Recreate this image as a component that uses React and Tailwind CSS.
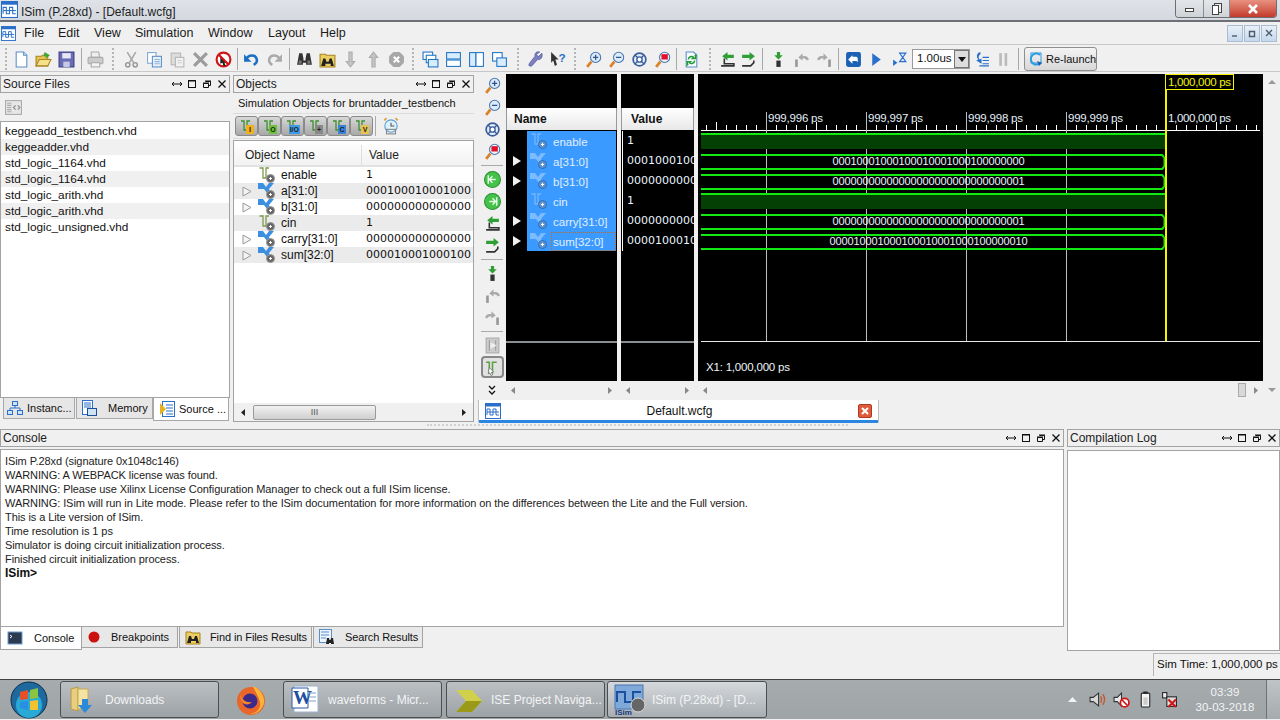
import React from "react";

const UI = "font-['Liberation_Sans',Arial,sans-serif]";

// --- little drawn icons ---
const Svg = ({ s = 17, v = 16, children, className = "" }) => (
  <svg width={s} height={s} viewBox={`0 0 ${v} ${v}`} className={`shrink-0 ${className}`}>
    {children}
  </svg>
);

const WaveLogo = ({ s = 16 }) => (
  <Svg s={s}>
    <rect x="0.5" y="0.5" width="15" height="15" fill="#fff" stroke="#2a6fc9" />
    <rect x="0.5" y="0.5" width="15" height="3" fill="#2a6fc9" />
    <path d="M2 12V6h3v6h3V6h3v6h3" fill="none" stroke="#2a6fc9" />
    <path d="M2 9h12" stroke="#2a6fc9" />
  </Svg>
);

const Doc = () => (
  <Svg>
    <path d="M3 1h7l3 3v11H3z" fill="#fff" stroke="#5b8fc7" />
    <path d="M10 1v3h3" fill="#cfe3f7" stroke="#5b8fc7" />
  </Svg>
);
const OpenFolder = () => (
  <Svg>
    <path d="M1 5h5l1-1h5v10H1z" fill="#e8c34f" stroke="#a78420" />
    <path d="M1 14l3-6h11l-3 6z" fill="#f6e08a" stroke="#a78420" />
    <path d="M9 1l5 3-4 3V5H8z" fill="#3fa535" />
  </Svg>
);
const Floppy = () => (
  <Svg>
    <rect x="1" y="1" width="14" height="14" fill="#6a6db5" stroke="#3b3d80" />
    <rect x="4" y="2" width="8" height="5" fill="#e6e8f5" />
    <rect x="5" y="10" width="6" height="5" fill="#c8cae5" />
  </Svg>
);
const Printer = () => (
  <Svg>
    <path d="M4 1h7l1 5H4z" fill="#eee" stroke="#aaa" />
    <rect x="1" y="6" width="14" height="6" rx="1" fill="#ccc" stroke="#aaa" />
    <rect x="4" y="11" width="8" height="4" fill="#f4f4f4" stroke="#aaa" />
  </Svg>
);
const Scissors = () => (
  <Svg>
    <path d="M4 1l6 10M12 1L6 11" stroke="#aaa" strokeWidth="1.6" />
    <circle cx="4.5" cy="13" r="2" fill="none" stroke="#999" strokeWidth="1.4" />
    <circle cx="11.5" cy="13" r="2" fill="none" stroke="#999" strokeWidth="1.4" />
  </Svg>
);
const Copy = () => (
  <Svg>
    <rect x="1.5" y="1.5" width="8" height="10" fill="#fff" stroke="#7fa7d4" />
    <rect x="6" y="5" width="8.5" height="10" fill="#e8f1fb" stroke="#5b8fc7" />
    <path d="M8 8h5M8 10h5M8 12h5" stroke="#8fb3dc" />
  </Svg>
);
const Paste = () => (
  <Svg>
    <rect x="2" y="2" width="9" height="11" fill="#ddd" stroke="#b5b5b5" />
    <rect x="6" y="6" width="8" height="9" fill="#f2f2f2" stroke="#b5b5b5" />
    <path d="M8 9h4M8 11h4" stroke="#ccc" />
  </Svg>
);
const Cross = () => (
  <Svg>
    <path d="M2 2l12 12M14 2L2 14" stroke="#9c9c9c" strokeWidth="3" />
  </Svg>
);
const NoSign = () => (
  <Svg>
    <circle cx="8" cy="8" r="6.5" fill="#fff" stroke="#d01515" strokeWidth="2" />
    <path d="M5 4l6 7-2 0 1 3-2 0-1-3-2 1z" fill="#222" />
    <path d="M3.5 3.5l9 9" stroke="#d01515" strokeWidth="2" />
  </Svg>
);
const Undo = ({ c = "#1a6fc4" }) => (
  <Svg>
    <path d="M3 8c2-5 9-5 10 0 .4 2-1 4-3 5" fill="none" stroke={c} strokeWidth="2.4" />
    <path d="M1 3v7h7z" fill={c} />
  </Svg>
);
const Redo = () => (
  <Svg>
    <path d="M13 8C11 3 4 3 3 8c-.4 2 1 4 3 5" fill="none" stroke="#aaa" strokeWidth="2.4" />
    <path d="M15 3v7H8z" fill="#aaa" />
  </Svg>
);
const Binoc = ({ s = 17 }) => (
  <Svg s={s}>
    <path d="M3 2h3l1 5v2h2V7l1-5h3l2 11H9.500v-2h-3v2H1z" fill="#333" />
    <path d="M3 9l-.8 3h3V9zM13 9l.8 3h-3V9z" fill="#777" />
  </Svg>
);
const FolderBin = ({ s = 17 }) => (
  <Svg s={s}>
    <path d="M1 3h5l1 1h8v11H1z" fill="#eccd60" stroke="#a78420" />
    <path d="M4 7h2l1 3h2l1-3h2l2 7h-3v-2H6v2H2z" fill="#222" />
  </Svg>
);
const Arrow = ({ up }) => (
  <Svg className={up ? "" : "rotate-180"}>
    <path d="M8 1l4 5H9.500v9h-3V6H4z" fill="#c4c4c4" stroke="#adadad" />
  </Svg>
);
const StopGrey = () => (
  <Svg>
    <path d="M5 1h6l4 4v6l-4 4H5l-4-4V5z" fill="#a8a8a8" />
    <path d="M5.500 5.500l5 5M10.500 5.500l-5 5" stroke="#fff" strokeWidth="2" />
  </Svg>
);
const Tile = ({ kind }) => (
  <Svg>
    {kind === "casc" && (
      <>
        <rect x="1" y="1" width="9" height="7" fill="#fff" stroke="#1f74c4" />
        <rect x="4" y="4" width="9" height="7" fill="#fff" stroke="#1f74c4" />
        <rect x="6" y="8" width="9" height="7" fill="#d8ecff" stroke="#1f74c4" />
      </>
    )}
    {kind === "h" && (
      <>
        <rect x="1.500" y="1.500" width="13" height="6" fill="#d8ecff" stroke="#1f74c4" />
        <rect x="1.500" y="8.500" width="13" height="6" fill="#fff" stroke="#1f74c4" />
      </>
    )}
    {kind === "v" && (
      <>
        <rect x="1.500" y="1.500" width="6" height="13" fill="#d8ecff" stroke="#1f74c4" />
        <rect x="7.500" y="1.500" width="7" height="13" fill="#fff" stroke="#1f74c4" />
      </>
    )}
    {kind === "two" && (
      <>
        <rect x="1.500" y="1.500" width="9" height="8" fill="#fff" stroke="#1f74c4" />
        <rect x="5.500" y="6.500" width="9" height="8" fill="#d8ecff" stroke="#1f74c4" />
      </>
    )}
  </Svg>
);
const Wrench = () => (
  <Svg>
    <path d="M14 2l-3 3-1.500-.5L9 3l3-2C9 0 7 2 7.500 5L2 12c-1 2 1 3 2.500 2L10 8c3 .5 5-2 4-6z" fill="#7c7fc0" stroke="#4e5196" strokeWidth=".6" />
  </Svg>
);
const HelpArrow = () => (
  <Svg>
    <path d="M2 1l7 7H6l1.500 5-2 1L4 9l-2 2z" fill="#333" />
    <text x="9" y="10" fontSize="11" fontWeight="700" fill="#2a6fc9" fontFamily="Liberation Sans">?</text>
  </Svg>
);
const Mag = ({ kind = "in" }) => (
  <Svg>
    <path d="M6 10l-4 5" stroke="#d9822b" strokeWidth="2.6" />
    <circle cx="10" cy="6" r="4.800" fill={kind === "mark" ? "#f4f4f4" : "#dcebfa"} stroke="#4a77b0" />
    {kind === "in" && <path d="M7.500 6h5M10 3.500v5" stroke="#33568a" strokeWidth="1.200" />}
    {kind === "out" && <path d="M7.500 6h5" stroke="#33568a" strokeWidth="1.200" />}
    {kind === "mark" && <rect x="7" y="3" width="6" height="5" fill="#e0102a" />}
  </Svg>
);
const Fit = () => (
  <Svg>
    <circle cx="8" cy="8" r="6" fill="#e4effa" stroke="#3c5f9c" strokeWidth="1.600" />
    <circle cx="8" cy="8" r="2.500" fill="#fff" stroke="#3c5f9c" strokeWidth="1.300" />
    <path d="M3.500 3.500l3 3M12.500 3.500l-3 3M3.500 12.500l3-3M12.500 12.500l-3-3" stroke="#3c5f9c" strokeWidth="1.300" />
  </Svg>
);
const Refresh = () => (
  <Svg>
    <path d="M3 1h7l3 3v11H3z" fill="#f5fbff" stroke="#5b8fc7" />
    <path d="M5 8a3 3 0 0 1 5-2l-1 1h3V4l-1 1M11 9a3 3 0 0 1-5 2l1-1H4v3l1-1" fill="none" stroke="#239a35" strokeWidth="1.400" />
  </Svg>
);
const StepBack = () => (
  <Svg>
    <path d="M2 14h12v-2H5V7" fill="none" stroke="#333" strokeWidth="1.500" />
    <path d="M3 5l5-4v2.500h6v3H8V9z" fill="#2f9e35" />
  </Svg>
);
const StepFwd = () => (
  <Svg>
    <path d="M2 14h8l3-3V9" fill="none" stroke="#333" strokeWidth="1.500" />
    <path d="M14 5L9 1v2.500H2v3h7V9z" fill="#2f9e35" />
  </Svg>
);
const StepInto = () => (
  <Svg>
    <rect x="6" y="9" width="4" height="6" fill="#333" />
    <path d="M8 8l4-4H9.500V1h-3v3H4z" fill="#2f9e35" />
  </Svg>
);
const StepOver = ({ flip }) => (
  <Svg className={flip ? "-scale-x-100" : ""}>
    <rect x="2" y="8" width="2.500" height="7" fill="#999" />
    <path d="M5 8c1-3 3-4 6-3v-3l4 4-4 3V7c-2-.5-3 .5-4 2z" fill="#aaa" transform="matrix(-1 0 0 1 20 0)" />
  </Svg>
);
const BackBlue = () => (
  <Svg>
    <rect x="1" y="1" width="14" height="14" rx="2" fill="#1b62b5" />
    <path d="M7 4L3 8l4 4V9.500h3c1 0 2 .5 2 1.500V7c0-1-1-1.500-2-1.500H7z" fill="#fff" />
  </Svg>
);
const PlayBlue = () => (
  <Svg>
    <path d="M4 2l8 6-8 6z" fill="#2a6fc9" />
  </Svg>
);
const Hourglass = () => (
  <Svg>
    <path d="M2 8l4 3-4 3z" fill="#2a6fc9" />
    <path d="M8 2h6l-3 4 3 4H8l3-4z" fill="#d8ecff" stroke="#2a6fc9" />
  </Svg>
);
const Relaunch = () => (
  <Svg s={16}>
    <path d="M12 4a5.500 5.500 0 1 0 1 7" fill="none" stroke="#2e9be0" strokeWidth="2" />
    <rect x="3" y="2" width="10" height="10" fill="none" stroke="#2e9be0" />
    <path d="M9 10l5 2-3 3z" fill="#1b62b5" />
  </Svg>
);
const RunAll = () => (
  <Svg>
    <path d="M7 1C3 2 3 6 5 8l-2 1 5 3V7L6 8C5 6 5 4 7 3z" fill="#2a6fc9" />
    <path d="M9 6h6M9 9h6M9 12h6M6 14h9" stroke="#2a6fc9" />
  </Svg>
);
const Pause = () => (
  <Svg>
    <rect x="4" y="2" width="2.500" height="12" fill="#bbb" />
    <rect x="9" y="2" width="2.500" height="12" fill="#bbb" />
  </Svg>
);

const LogicSig = ({ light }) => (
  <Svg s={18} v={18}>
    <path d="M1.500 2H5v10h3V2h3" fill="none" stroke={light ? "#74b6ff" : "#7c9c4e"} strokeWidth="1.300" />
    <circle cx="12.500" cy="12.500" r="4" fill={light ? "#5f94d0" : "#666"} stroke={light ? "#2d6cb8" : "#999"} />
    <path d="M11 12.500h3M12.500 11v3" stroke="#fff" />
  </Svg>
);
const BusSig = ({ light }) => (
  <Svg s={18} v={18}>
    <path d="M0 1h5l3 4 3-4h5L11 7l1 3-3 1-3-4H0z" fill={light ? "#7dbbff" : "#3d8fe0"} />
    <circle cx="12.500" cy="12.500" r="4" fill={light ? "#5f94d0" : "#666"} stroke={light ? "#2d6cb8" : "#999"} />
    <path d="M11 12.500h3M12.500 11v3" stroke="#fff" />
  </Svg>
);

const DockCtrls = () => (
  <div className="flex items-center gap-[3px] text-[#111]">
    <Svg s={12} v={12}><path d="M1 6h10M3 4L1 6l2 2M9 4l2 2-2 2" fill="none" stroke="#111" /></Svg>
    <Svg s={12} v={12}><rect x="2.500" y="2.500" width="7" height="7" fill="none" stroke="#111" /><path d="M2 3h8" stroke="#111" /></Svg>
    <Svg s={12} v={12}><path d="M4.500 3.500h5v4h-2M2.500 5.500h5v4h-5z" fill="none" stroke="#111" /><path d="M4 3h6M2 5h6" stroke="#111" /></Svg>
    <Svg s={12} v={12}><path d="M2.500 2.500l7 7M9.500 2.500l-7 7" stroke="#111" strokeWidth="1.300" /></Svg>
  </div>
);

const PanelHead = ({ title }) => (
  <div className="h-[18px] flex items-center justify-between border border-[#a3a3a3] pl-[2px] pr-[1px] bg-[#f0f0f0] text-[12px] text-[#222]">
    <span className="whitespace-nowrap">{title}</span>
    <DockCtrls />
  </div>
);

const Grip = ({ w }) => (
  <div className={`${w} h-[22px] flex justify-center shrink-0`}>
    <div className="h-full border-l-2 border-dotted border-[#b5b5b5]" />
  </div>
);
const Sep = ({ w }) => (
  <div className={`${w} h-[22px] flex justify-center shrink-0`}>
    <div className="w-px h-full bg-[#a8a8a8]" />
  </div>
);
const Tb = ({ children, w = "w-[23px]" }) => <div className={`${w} h-[22px] flex items-center justify-center shrink-0`}>{children}</div>;

const Toolbar = () => (
  <div className="h-[28px] border-y border-[#c8c8c8] flex items-center pl-[1px] pt-[2px] bg-[#f0f0f0]">
    <Grip w="w-[9px]" />
    <Tb w="w-[22.500px]"><Doc /></Tb><Tb w="w-[22.500px]"><OpenFolder /></Tb><Tb w="w-[22.500px]"><Floppy /></Tb>
    <Sep w="w-[7px]" />
    <Tb w="w-[22.500px]"><Printer /></Tb>
    <Grip w="w-[12.500px]" />
    <Tb><Scissors /></Tb><Tb><Copy /></Tb><Tb><Paste /></Tb><Tb><Cross /></Tb><Tb><NoSign /></Tb>
    <Sep w="w-[5px]" />
    <Tb><Undo /></Tb><Tb><Redo /></Tb>
    <Sep w="w-[7px]" />
    <Tb><Binoc /></Tb><Tb><FolderBin /></Tb><Tb><Arrow /></Tb><Tb><Arrow up /></Tb><Tb><StopGrey /></Tb>
    <Grip w="w-[11px]" />
    <Tb><Tile kind="casc" /></Tb><Tb><Tile kind="h" /></Tb><Tb><Tile kind="v" /></Tb><Tb><Tile kind="two" /></Tb>
    <Grip w="w-[14px]" />
    <Tb w="w-[22px]"><Wrench /></Tb><Tb w="w-[22px]"><HelpArrow /></Tb>
    <Grip w="w-[13px]" />
    <Tb><Mag /></Tb><Tb><Mag kind="out" /></Tb><Tb><Fit /></Tb><Tb><Mag kind="mark" /></Tb>
    <Sep w="w-[6px]" />
    <Tb><Refresh /></Tb>
    <Grip w="w-[14.500px]" />
    <Tb w="w-[21px]"><StepBack /></Tb><Tb w="w-[21px]"><StepFwd /></Tb>
    <Sep w="w-[7.500px]" />
    <Tb><StepInto /></Tb><Tb><StepOver /></Tb><Tb><StepOver flip /></Tb>
    <Sep w="w-[6px]" />
    <Tb><BackBlue /></Tb><Tb><PlayBlue /></Tb><Tb><Hourglass /></Tb>
    <div className="w-[58px] h-[20px] ml-[1.500px] border border-[#9a9a9a] bg-white flex items-center justify-between pl-[4px] text-[11.500px] text-[#111] shrink-0">
      1.00us
      <div className="w-[15px] h-[18px] border border-[#777] bg-[#ddd] flex items-center justify-center">
        <Svg s={8} v={8}><path d="M0 2h8L4 7z" fill="#111" /></Svg>
      </div>
    </div>
    <Tb><RunAll /></Tb><Tb w="w-[20px]"><Pause /></Tb>
    <Sep w="w-[11px]" />
    <div className="w-[73px] h-[24px] rounded-[3px] border border-[#8f8f8f] bg-gradient-to-b from-[#f4f4f4] to-[#d8d8d8] flex items-center gap-[2px] pl-[3px] text-[11px] text-[#111] shrink-0 whitespace-nowrap">
      <Relaunch />
      Re-launch
    </div>
  </div>
);

const files = ["keggeadd_testbench.vhd", "keggeadder.vhd", "std_logic_1164.vhd", "std_logic_1164.vhd", "std_logic_arith.vhd", "std_logic_arith.vhd", "std_logic_unsigned.vhd"];

const SourcePanel = () => (
  <div className="w-[230px] pt-[3px] flex flex-col shrink-0">
    <PanelHead title="Source Files" />
    <div className="h-[28px] flex items-center pl-[5px]">
      <Svg>
        <rect x="0.500" y="1.500" width="15" height="13" fill="#e6e6e6" stroke="#aaa" />
        <path d="M2 4h4M2 6h4M2 8h4M2 10h4M2 12h4" stroke="#aaa" />
        <path d="M10 6L8 8l2 2M12 6l2 2-2 2" fill="none" stroke="#888" />
      </Svg>
    </div>
    <div className="h-[277px] bg-white border border-[#a3a3a3] pt-[1px] text-[11.800px] text-[#111]">
      {files.map((f, i) => (
        <div key={i} className={`h-[16px] pl-[4px] leading-[16px] ${i % 2 ? "bg-[#f0f0f0]" : ""}`}>{f}</div>
      ))}
    </div>
    <div className="flex h-[23px] text-[11px] text-[#111]">
      <div className="ml-[3px] w-[72px] h-[21px] border-x border-b border-[#a8a8a8] bg-[#e6e6e6] flex items-center gap-[4px] pl-[3px]">
        <Svg s={16}><rect x="5.500" y="1.500" width="5" height="4" fill="#cfe3f7" stroke="#2a6fc9" /><rect x="0.500" y="10.500" width="5" height="4" fill="#cfe3f7" stroke="#2a6fc9" /><rect x="10.500" y="10.500" width="5" height="4" fill="#cfe3f7" stroke="#2a6fc9" /><path d="M8 5v3M3 10V8h10v2" fill="none" stroke="#2a6fc9" /></Svg>
        <span className="whitespace-nowrap">Instanc...</span>
      </div>
      <div className="ml-[1px] w-[77px] h-[21px] border-x border-b border-[#a8a8a8] bg-[#e6e6e6] flex items-center gap-[11px] pl-[4px]">
        <Svg s={16}><rect x="1.500" y="0.500" width="10" height="14" fill="#fff" stroke="#2a6fc9" /><path d="M3 3h7M3 5h7M3 7h7" stroke="#2a6fc9" /><rect x="6.500" y="8.500" width="9" height="7" fill="#cfe3f7" stroke="#1b4f9a" /></Svg>
        Memory
      </div>
      <div className="w-[76px] h-[23px] border-x border-b border-[#a8a8a8] bg-white flex items-center gap-[3px] pl-[6px]">
        <Svg s={16}><rect x="2.500" y="0.500" width="12" height="15" fill="#fff" stroke="#2a6fc9" /><path d="M6 4h7M6 7h7M6 10h7M6 13h7" stroke="#2a6fc9" /><path d="M0 2l6 6-6 6z" fill="#e6b422" /></Svg>
        <span className="whitespace-nowrap">Source ...</span>
      </div>
    </div>
  </div>
);

const objects = [
  { n: "enable", v: "1" },
  { n: "a[31:0]", v: "000100010001000100010", bus: true },
  { n: "b[31:0]", v: "000000000000000000000", bus: true },
  { n: "cin", v: "1" },
  { n: "carry[31:0]", v: "000000000000000000000", bus: true },
  { n: "sum[32:0]", v: "000010001000100010001", bus: true },
];

const filterBadges = [
  { c: "#f0b020", t: "I" },
  { c: "#6cc33a", t: "O" },
  { c: "#3f9be8", t: "I/O" },
  { c: "#888", t: "+" },
  { c: "#3a82d8", t: "C" },
  { c: "#e8c24a", t: "V" },
];

const ObjectsPanel = () => (
  <div className="w-[241px] ml-[3px] pt-[3px] flex flex-col shrink-0">
    <PanelHead title="Objects" />
    <div className="h-[20px] pl-[5px] flex items-center text-[11px] text-[#111] whitespace-nowrap">Simulation Objects for bruntadder_testbench</div>
    <div className="h-[26px] flex items-center pl-[2px] border-y border-[#dcdcdc]">
      {filterBadges.map((b) => (
        <div key={b.t} className="relative w-[23px] h-[20px] rounded-[3px] border border-[#8a8a8a] bg-gradient-to-b from-[#d8d8d8] to-[#a8a8a8] flex items-center justify-center shrink-0">
          <Svg s={14} v={14}><path d="M1 2h3v9h3V2h3" fill="none" stroke="#3e9030" strokeWidth="1.300" /></Svg>
          <span className="absolute right-[3px] bottom-[1px] h-[9px] min-w-[8px] px-px text-[7px] leading-[9px] font-bold text-center text-[#222]" style={{ backgroundColor: b.c }}>{b.t}</span>
        </div>
      ))}
      <div className="w-px h-[20px] bg-[#aaa] mx-[2px]" />
      <div className="ml-[4px]">
        <Svg s={18}><circle cx="8" cy="8" r="5.500" fill="#dff1fb" stroke="#5aa0d8" /><path d="M8 5v3h3" fill="none" stroke="#555" /><path d="M2 3l2-2M14 3l-2-2" stroke="#e0a030" strokeWidth="1.500" /><rect x="4" y="11" width="8" height="4" fill="none" stroke="#888" /></Svg>
      </div>
    </div>
    <div className="mt-[1px] h-[282px] border border-[#a3a3a3] bg-white flex flex-col">
      <div className="h-[26px] pt-[4px] flex items-center text-[12px] text-[#222] border-b-2 border-[#e2e2e2] bg-gradient-to-b from-white to-[#f2f2f2] shrink-0">
        <span className="w-[128px] pl-[11px] h-full flex items-center border-r border-[#dedede]">Object Name</span>
        <span className="pl-[7px]">Value</span>
      </div>
      <div className="flex-1">
        {objects.map((o, i) => (
          <div key={o.n} className={`h-[16px] flex items-center text-[12px] text-[#111] ${i % 2 ? "bg-[#ebebeb]" : ""}`}>
            <div className="w-[24px] flex justify-center shrink-0">
              {o.bus && <Svg s={11} v={11}><path d="M2 1l8 4.500L2 10z" fill="#f4f4f4" stroke="#9a9a9a" /></Svg>}
            </div>
            <div className="w-[23px] shrink-0">{o.bus ? <BusSig /> : <LogicSig />}</div>
            <span className="w-[85px] shrink-0">{o.n}</span>
            <span className="w-[105px] overflow-hidden whitespace-nowrap font-['DejaVu_Sans',sans-serif] text-[11px]">{o.v}</span>
          </div>
        ))}
      </div>
      <div className="h-[18px] flex items-center bg-[#f0f0f0] shrink-0">
        <div className="w-[19px] flex justify-center"><Svg s={7} v={7}><path d="M5 0v7L1 3.500z" fill="#222" /></Svg></div>
        <div className="w-[123px] h-[15px] rounded-[2px] border border-[#9a9a9a] bg-gradient-to-b from-[#f2f2f2] to-[#cfcfcf] flex items-center justify-center text-[9px] text-[#555] leading-none">III</div>
        <div className="ml-auto w-[19px] flex justify-center"><Svg s={7} v={7}><path d="M2 0v7l4-3.500z" fill="#222" /></Svg></div>
      </div>
    </div>
  </div>
);

const VTb = ({ children, h = "h-[22px]", active }) => (
  <div className={`${h} flex items-center justify-center shrink-0 ${active ? "w-[23px] mx-auto border-2 border-[#888] rounded-[4px] bg-[#e2e2e2]" : ""}`}>{children}</div>
);
const VSep = () => <div className="h-px bg-[#aaa] my-[2.500px] mx-[3px] shrink-0" />;
const GoCircle = ({ back }) => (
  <Svg>
    <circle cx="8" cy="8" r="7.500" fill="#44c24a" stroke="#2e8f34" />
    <path d={back ? "M11 8H5m3-3L5 8l3 3M4 4v8" : "M5 8h6M8 5l3 3-3 3M12 4v8"} fill="none" stroke="#e8ffe8" strokeWidth="1.300" />
  </Svg>
);

const VertToolbar = () => (
  <div className="w-[28px] pt-[2px] flex flex-col shrink-0">
    <VTb><Mag /></VTb>
    <VTb><Mag kind="out" /></VTb>
    <VTb><Fit /></VTb>
    <VTb><Mag kind="mark" /></VTb>
    <VSep />
    <VTb><GoCircle back /></VTb>
    <VTb><GoCircle /></VTb>
    <VTb><StepBack /></VTb>
    <VTb><StepFwd /></VTb>
    <VSep />
    <VTb><StepInto /></VTb>
    <VTb><StepOver /></VTb>
    <VTb><StepOver flip /></VTb>
    <VSep />
    <VTb>
      <Svg><rect x="2" y="1" width="12" height="14" fill="#ccc" stroke="#aaa" /><path d="M5 3v10M11 3v10" stroke="#999" /><path d="M6 5l6 3-6 3z" fill="#eee" /></Svg>
    </VTb>
    <VTb active>
      <Svg><path d="M2 3h3v10h3V3h4" fill="none" stroke="#5fa047" strokeWidth="1.500" /><path d="M5 8l4 4-2 .5 1 2.500-1.500.5-1-2.500L4 14z" fill="#fff" stroke="#555" strokeWidth=".6" /></Svg>
    </VTb>
    <VTb h="h-[24px]">
      <Svg s={10} v={10}><path d="M2 1l3 3 3-3M2 6l3 3 3-3" fill="none" stroke="#111" strokeWidth="1.300" /></Svg>
    </VTb>
  </div>
);

const nameRows = objects.map((o, i) => ({ ...o, focus: i === 5 }));

const NameCol = () => (
  <div className="w-[111px] h-[307px] bg-black flex flex-col shrink-0">
    <div className="h-[34px]" />
    <div className="h-[22px] bg-gradient-to-b from-white to-[#e8e8e8] border-x border-[#999] flex items-center pl-[7px] text-[12px] font-bold text-[#111]">Name</div>
    <div className="h-[1px]" />
    {nameRows.map((o) => (
      <div key={o.n} className="h-[20px] flex items-center text-[11.500px] text-[#e2efff]">
        <div className="w-[21px] flex justify-center shrink-0">
          {o.bus && <Svg s={10} v={10}><path d="M1 0l8 5-8 5z" fill="#f0f0f0" /></Svg>}
        </div>
        <div className="w-[89px] h-[20px] bg-[#3b9aff] flex items-center pl-[3px] gap-[3px]">
          {o.bus ? <BusSig light /> : <LogicSig light />}
          <span className={`flex-1 h-[19px] leading-[18px] pl-[1px] border border-dotted ${o.focus ? "border-[#c06a20]" : "border-transparent"}`}>{o.n}</span>
        </div>
      </div>
    ))}
    <div className="h-[90px]" />
    <div className="h-[2px] bg-[#8a8d90]" />
  </div>
);

const ValueCol = () => (
  <div className="w-[73px] h-[307px] bg-black flex flex-col shrink-0">
    <div className="h-[34px]" />
    <div className="h-[22px] bg-gradient-to-b from-white to-[#e8e8e8] border-x border-[#999] flex items-center pl-[9px] text-[12px] font-bold text-[#111]">Value</div>
    <div className="h-[1px]" />
    <div className="h-[120px] ml-[1px] pl-[4px] border-l border-white">
      {objects.map((o) => (
        <div key={o.n} className="h-[20px] leading-[20px] text-[11px] font-['DejaVu_Sans',sans-serif] text-[#eaf4ff] overflow-hidden whitespace-nowrap">{o.v}</div>
      ))}
    </div>
    <div className="h-[90px]" />
    <div className="h-[2px] bg-[#8a8d90]" />
  </div>
);

// waveform canvas, coordinates are relative to the black panel (x0=698, y0=74)
const X = (x) => x - 698;
const Y = (y) => y - 74;
const buses = [
  { top: 154, bot: 168, t: "00010001000100010001000100000000" },
  { top: 174, bot: 188, t: "00000000000000000000000000000001" },
  { top: 214, bot: 228, t: "00000000000000000000000000000001" },
  { top: 234, bot: 248, t: "000010001000100010001000100000010" },
];
const grids = [
  [766, "999,996 ps"],
  [866, "999,997 ps"],
  [966, "999,998 ps"],
  [1066, "999,999 ps"],
];

const WavePanel = () => {
  const ticks = [];
  for (let x = 706; x < 1260; x += 10) ticks.push(x);
  return (
    <div className="w-[565px] h-[307px] bg-black shrink-0">
      <svg width="565" height="307" fontFamily="Liberation Sans, Arial, sans-serif" fontSize="11.500">
        {ticks.map((x) => (
          <line key={x} x1={X(x) + 0.5} x2={X(x) + 0.5} y1={(x - 716) % 100 === 0 ? Y(122) : Y(125)} y2={Y(130)} stroke="#fff" />
        ))}
        <line x1={X(701)} x2={X(1260)} y1={Y(130.5)} y2={Y(130.5)} stroke="#fff" />
        {grids.map(([x, t]) => (
          <g key={x}>
            <line x1={X(x) + 0.5} x2={X(x) + 0.5} y1={Y(112)} y2={Y(341)} stroke="#bdbdbd" />
            <text x={X(x) + 2} y={Y(122)} fill="#e6f1fb" textLength="55">{t}</text>
          </g>
        ))}
        <text x={X(1168)} y={Y(122)} fill="#e6f1fb" textLength="63">1,000,000 ps</text>
        {[[133, 149], [193, 209]].map(([a, b]) => (
          <g key={a}>
            <rect x={X(701)} y={Y(a)} width="465" height={b - a} fill="#043f04" />
            <rect x={X(701)} y={Y(a)} width="465" height="2" fill="#12e812" />
          </g>
        ))}
        {buses.map((b) => (
          <g key={b.top}>
            <path d={`M${X(701)} ${Y(b.top) + 1}H${X(1162)}l2 2M${X(701)} ${Y(b.bot) + 1}H${X(1162)}l2 -2M${X(1164.5)} ${Y(b.top) + 3}v${b.bot - b.top - 4}`} fill="none" stroke="#12e812" strokeWidth="2" />
            <text x={X(928.5)} y={Y(b.bot) - 3} textAnchor="middle" fill="#eaf4ff" textLength={b.t.length * 6} fontSize="11">{b.t}</text>
          </g>
        ))}
        <line x1={X(701)} x2={X(1260)} y1={Y(341.5)} y2={Y(341.5)} stroke="#e8e8e8" />
        <rect x={X(1165)} y={Y(90)} width="2" height="251" fill="#f4f400" />
        <rect x={X(1165.5)} y={Y(74.5)} width="68" height="15" fill="none" stroke="#f4f400" />
        <text x={X(1168)} y={Y(86)} fill="#f4f400" textLength="63">1,000,000 ps</text>
        <text x={X(706)} y={Y(371)} fill="#eef5fb" textLength="84">X1: 1,000,000 ps</text>
      </svg>
    </div>
  );
};

const ScrollArrows = ({ w, right }) => (
  <div className={`${w} h-[18px] flex items-center justify-between px-[4px] bg-[#f0f0f0] shrink-0`}>
    <Svg s={7} v={7}><path d="M5 0v7L1 3.500z" fill="#888" /></Svg>
    {right}
    <Svg s={7} v={7}><path d="M2 0v7l4-3.500z" fill="#888" /></Svg>
  </div>
);

const WaveArea = () => (
  <div className="w-[802px] shrink-0 flex flex-col">
    <div className="h-[328px] flex">
      <VertToolbar />
      <div className="flex flex-col pt-[2px]">
        <div className="flex gap-[4px] h-[307px]">
          <NameCol />
          <ValueCol />
          <WavePanel />
        </div>
        <div className="flex gap-[4px]">
          <ScrollArrows w="w-[111px]" />
          <ScrollArrows w="w-[73px]" />
          <ScrollArrows
            w="w-[565px]"
            right={<div className="ml-auto mr-[6px] w-[8px] h-[14px] border border-[#aaa] bg-[#d8d8d8]" />}
          />
        </div>
      </div>
      <div className="flex-1 flex flex-col items-center justify-between pt-[6px] pb-[6px]">
        <Svg s={8} v={8}><path d="M4 2L0 6h8z" fill="#999" /></Svg>
        <Svg s={8} v={8}><path d="M4 6L0 2h8z" fill="#999" /></Svg>
      </div>
    </div>
    <div className="w-[401px] h-[23px] border-x border-[#bbb] border-b-[3px] border-b-[#2a86e0] bg-white flex items-center justify-between pl-[6px] pr-[6px] pt-[1px] rounded-b-[2px] text-[12px] text-[#111]">
      <WaveLogo s={16} />
      <span>Default.wcfg</span>
      <div className="w-[14px] h-[14px] rounded-[2px] bg-[#e05a3c] border border-[#b03a20] flex items-center justify-center">
        <Svg s={8} v={8}><path d="M1 1l6 6M7 1L1 7" stroke="#fff" strokeWidth="2" /></Svg>
      </div>
    </div>
  </div>
);

const consoleLines = [
  "ISim P.28xd (signature 0x1048c146)",
  "WARNING: A WEBPACK license was found.",
  "WARNING: Please use Xilinx License Configuration Manager to check out a full ISim license.",
  "WARNING: ISim will run in Lite mode. Please refer to the ISim documentation for more information on the differences between the Lite and the Full version.",
  "This is a Lite version of ISim.",
  "Time resolution is 1 ps",
  "Simulator is doing circuit initialization process.",
  "Finished circuit initialization process.",
];

const ConsoleTabs = () => (
  <div className="flex h-[23px] text-[11px] text-[#111] whitespace-nowrap">
    <div className="w-[82px] h-[23px] border-x border-b border-[#a3a3a3] bg-white flex items-center pl-[6px] gap-[11px]">
      <Svg s={16}><rect x="1" y="2" width="14" height="12" fill="#2b3a4e" stroke="#6a9ad0" /><path d="M3 5l2 1.500L3 8" fill="none" stroke="#fff" /></Svg>
      Console
    </div>
    <div className="w-[96px] h-[21px] border-r border-b border-[#a3a3a3] bg-[#e8e8e8] flex items-center pl-[6px] gap-[11px]">
      <Svg s={12} v={12}><circle cx="6" cy="6" r="5.500" fill="#cc0f0f" /></Svg>
      Breakpoints
    </div>
    <div className="ml-px w-[133px] h-[21px] border-x border-b border-[#a3a3a3] bg-[#e8e8e8] flex items-center pl-[5px] gap-[9px] tracking-[-0.1px]">
      <FolderBin s={16} />
      Find in Files Results
    </div>
    <div className="ml-px w-[110px] h-[21px] border-x border-b border-[#a3a3a3] bg-[#e8e8e8] flex items-center pl-[5px] gap-[10px] tracking-[-0.1px]">
      <Svg s={16}><rect x="0.500" y="0.500" width="12" height="13" fill="#eef4fb" stroke="#5b8fc7" /><path d="M2 3h8M2 6h8M2 9h5" stroke="#5b8fc7" /><path d="M8 9h2l.5 2h1l.5-2h2l1 6h-3v-1h-2v1H7z" fill="#222" /></Svg>
      Search Results
    </div>
  </div>
);

const ConsoleArea = () => (
  <div className="h-[222px] flex gap-[3px] pr-0">
    <div className="w-[1064px] flex flex-col shrink-0">
      <PanelHead title="Console" />
      <div className="h-[178px] mt-[2px] bg-white border border-[#a3a3a3] px-[4px] pt-[4px] text-[11px] tracking-[-0.08px] leading-[14px] text-[#222] whitespace-nowrap">
        {consoleLines.map((l) => <div key={l}>{l}</div>)}
        <div className="font-bold text-[#111] text-[12px]">ISim&gt;</div>
      </div>
      <ConsoleTabs />
    </div>
    <div className="w-[213px] flex flex-col shrink-0">
      <PanelHead title="Compilation Log" />
      <div className="h-[203px] mt-[3px] bg-white border border-[#a3a3a3]" />
    </div>
  </div>
);

const TaskBtn = ({ w, children, text, active }) => (
  <div className={`${w} h-[37px] rounded-[3px] border border-[#4b4f52] flex items-center text-[12px] text-[#f2f4f6] shrink-0 bg-gradient-to-b ${active ? "from-[#d5d9dc] to-[#a9aeb2]" : "from-[#bcc0c3] to-[#9da2a6]"}`}>
    <div className="w-[44px] flex justify-center shrink-0">{children}</div>
    <span className="whitespace-nowrap">{text}</span>
  </div>
);

const Orb = () => (
  <svg width="38" height="38" viewBox="0 0 38 38">
    <circle cx="19" cy="19" r="18" fill="#1e6a9e" stroke="#0d2d4a" />
    <circle cx="19" cy="24" r="13" fill="#2ec0e8" opacity=".75" />
    <path d="M10 11l8-2v9l-8 1z" fill="#e8502a" />
    <path d="M20 9l8-2v10l-8 1z" fill="#8bc53f" />
    <path d="M10 21l8-1v9l-8-2z" fill="#2a8fe0" />
    <path d="M20 20l8-1v10l-8 0z" fill="#f5c22f" />
  </svg>
);

const Firefox = () => (
  <svg width="32" height="32" viewBox="0 0 32 32">
    <circle cx="16" cy="17" r="14" fill="#e8662a" />
    <path d="M18 2c8 3 12 11 11 17-2 8-9 12-14 11 8-1 11-7 10-12-1-5-5-10-7-16z" fill="#fbb43a" />
    <circle cx="15" cy="17" r="7.500" fill="#3b2a8c" />
    <path d="M5 10c2 6 6 9 12 8-2 3-7 3-9 1-2-2-3-5-3-9z" fill="#f5842a" />
  </svg>
);

const WordIcon = () => (
  <Svg s={30} v={30}>
    <path d="M3 1h24v26H3z" fill="#fff" stroke="#9bb3d2" />
    <path d="M1 3h16v20H1z" fill="#fff" stroke="#2c5aa6" />
    <text x="2" y="19" fontFamily="Liberation Serif" fontWeight="700" fontSize="19" fill="#1d4fa0">W</text>
    <path d="M18 8h7M18 12h7M18 16h7" stroke="#7fa0cc" />
  </Svg>
);

const Taskbar = () => (
  <div className="h-[40px] border-t border-[#3e4245] bg-gradient-to-b from-[#a6abae] to-[#9fa4a7] flex items-center">
    <div className="w-[60px] flex justify-center shrink-0 pr-[2px]"><Orb /></div>
    <TaskBtn w="w-[159px]" text="Downloads">
      <Svg s={30} v={30}>
        <path d="M3 4l7-2v24l-7-2z" fill="#e8cf80" stroke="#b89a42" />
        <path d="M10 4h10v20H10z" fill="#f5e3a3" stroke="#c7aa52" />
        <path d="M14 14h6v6h4l-7 8-7-8h4z" fill="#2d8ad8" />
      </Svg>
    </TaskBtn>
    <div className="w-[64px] flex justify-center shrink-0"><Firefox /></div>
    <TaskBtn w="w-[159px]" text="waveforms - Micr..."><WordIcon /></TaskBtn>
    <div className="w-[4px]" />
    <TaskBtn w="w-[159px]" text="ISE Project Naviga...">
      <Svg s={30} v={30}><path d="M2 5h16l10 11-10 11H2l10-11z" fill="#d0d04a" /><path d="M2 27l10-11h16L18 27z" fill="#9a9a18" /></Svg>
    </TaskBtn>
    <div className="w-[2px]" />
    <TaskBtn w="w-[160px]" text="ISim (P.28xd) - [D..." active>
      <Svg s={32} v={32}>
        <rect x="1" y="1" width="28" height="24" fill="#7ea9d8" stroke="#4a77b0" />
        <path d="M3 18V8h8v10h8V8h8" fill="none" stroke="#1d4fa0" strokeWidth="2" />
        <circle cx="24" cy="21" r="7" fill="#666" stroke="#ddd" />
        <text x="1" y="31" fontFamily="Liberation Sans" fontSize="8" fontWeight="700" fill="#123a80">ISim</text>
      </Svg>
    </TaskBtn>
    <div className="ml-auto flex items-center h-full">
      <Svg s={9} v={9} className="mr-[12px]"><path d="M4.500 2L9 7H0z" fill="#f2f2f2" /></Svg>
      <div className="flex items-center gap-[7px] mr-[15px]">
        <Svg><path d="M1 6h3l5-4v12l-5-4H1z" fill="#d8d8d8" stroke="#333" /><path d="M11 5c1 2 1 4 0 6M13 3c2 3 2 7 0 10" fill="none" stroke="#c9572c" strokeWidth="1.300" /></Svg>
        <Svg><path d="M1 6h3l4-4v12l-4-4H1z" fill="#e8e8e8" stroke="#333" /><circle cx="11" cy="11" r="4" fill="#fff" stroke="#d01515" strokeWidth="1.600" /><path d="M8.500 8.500l5 5" stroke="#d01515" strokeWidth="1.500" /></Svg>
        <Svg><rect x="4" y="2" width="8" height="13" rx="1" fill="#f4f4f4" stroke="#222" /><rect x="6" y="0.500" width="4" height="2" fill="#222" /><rect x="6" y="6" width="4" height="7" fill="#ccc" /></Svg>
        <Svg><rect x="1.500" y="1.500" width="4" height="5" fill="#eee" stroke="#222" /><rect x="5.500" y="5.500" width="9" height="9" fill="#ddd" stroke="#222" /><path d="M7 8l7 7M14 8l-7 7" stroke="#d01515" strokeWidth="2" /></Svg>
      </div>
      <div className="w-[64px] text-center text-[11.500px] leading-[15px] text-[#f2f4f6]">
        <div>03:39</div>
        <div>30-03-2018</div>
      </div>
      <div className="w-[14px] h-full ml-[9px] bg-gradient-to-b from-[#c0c4c7] to-[#a6abae] border-l border-[#6e7275]" />
    </div>
  </div>
);

export default function App() {
  return (
    <div className={`w-[1280px] h-[720px] overflow-hidden bg-[#f0f0f0] flex flex-col ${UI}`}>
      <div className="h-[22px] border-b-2 border-[#6d7176] bg-gradient-to-b from-[#dfe3e8] to-[#d5d9df] flex items-start text-[12px] text-[#222] shrink-0">
        <div className="w-[20px] h-[18px] ml-[1px] mt-[1px]"><WaveLogo s={17} /></div>
        <span className="mt-[3px]">ISim (P.28xd) - [Default.wcfg]</span>
        <div className="ml-auto mr-[3px] flex h-[18px] rounded-b-[4px] overflow-hidden border border-t-0 border-[#6b6f74]">
          <div className="w-[27px] bg-gradient-to-b from-[#e4e7ea] to-[#cfd2d6] flex items-center justify-center">
            <Svg s={10} v={10}><rect x="0.500" y="4.500" width="8" height="3" fill="#fff" stroke="#444" /></Svg>
          </div>
          <div className="w-[27px] border-x border-[#8a8e92] bg-gradient-to-b from-[#e4e7ea] to-[#cfd2d6] flex items-center justify-center">
            <Svg s={12} v={12}><rect x="3.500" y="0.500" width="7" height="9" fill="#eee" stroke="#444" /><rect x="1.500" y="2.500" width="6" height="9" fill="#fff" stroke="#444" /></Svg>
          </div>
          <div className="w-[46px] bg-gradient-to-b from-[#e89080] to-[#c2392a] flex items-center justify-center">
            <Svg s={12} v={12}><path d="M2 2l8 8M10 2l-8 8" stroke="#fff" strokeWidth="2.600" /></Svg>
          </div>
        </div>
      </div>

      <div className="h-[22px] flex items-center text-[12.500px] text-[#1a1a1a] shrink-0">
        <div className="ml-[1px] mr-[8px]"><WaveLogo s={15} /></div>
        <span className="w-[34px]">File</span>
        <span className="w-[36px]">Edit</span>
        <span className="w-[41px]">View</span>
        <span className="w-[73px]">Simulation</span>
        <span className="w-[60px]">Window</span>
        <span className="w-[52px]">Layout</span>
        <span>Help</span>
        <div className="ml-auto mr-[3px] flex gap-px">
          {["M3 9h5", "M3.500 4.500h5v5h-5z", "M3 3l6 6M9 3L3 9"].map((d) => (
            <div key={d} className="w-[16px] h-[17px] bg-gradient-to-b from-[#e8f0f8] to-[#c6d9ec] border border-[#a9bdd2] flex items-center justify-center">
              <Svg s={12} v={12}><path d={d} fill="none" stroke="#4d5c6c" strokeWidth="1.400" /></Svg>
            </div>
          ))}
        </div>
      </div>

      <div className="shrink-0"><Toolbar /></div>

      <div className="h-[351px] flex shrink-0">
        <SourcePanel />
        <ObjectsPanel />
        <div className="w-[4px] shrink-0" />
        <WaveArea />
      </div>
      <div className="h-[6px] shrink-0 pl-[427px] pt-[1px]">
        <div className="w-[421px] border-t-2 border-dotted border-[#d2d2d2]" />
      </div>

      <ConsoleArea />

      <div className="h-[28px] flex justify-end items-start pt-[2px] shrink-0">
        <div className="w-[127px] h-[23px] border-l border-t border-[#b5b5b5] flex items-center pl-[3px] text-[11.500px] text-[#111] whitespace-nowrap">Sim Time: 1,000,000 ps</div>
      </div>

      <Taskbar />
    </div>
  );
}
